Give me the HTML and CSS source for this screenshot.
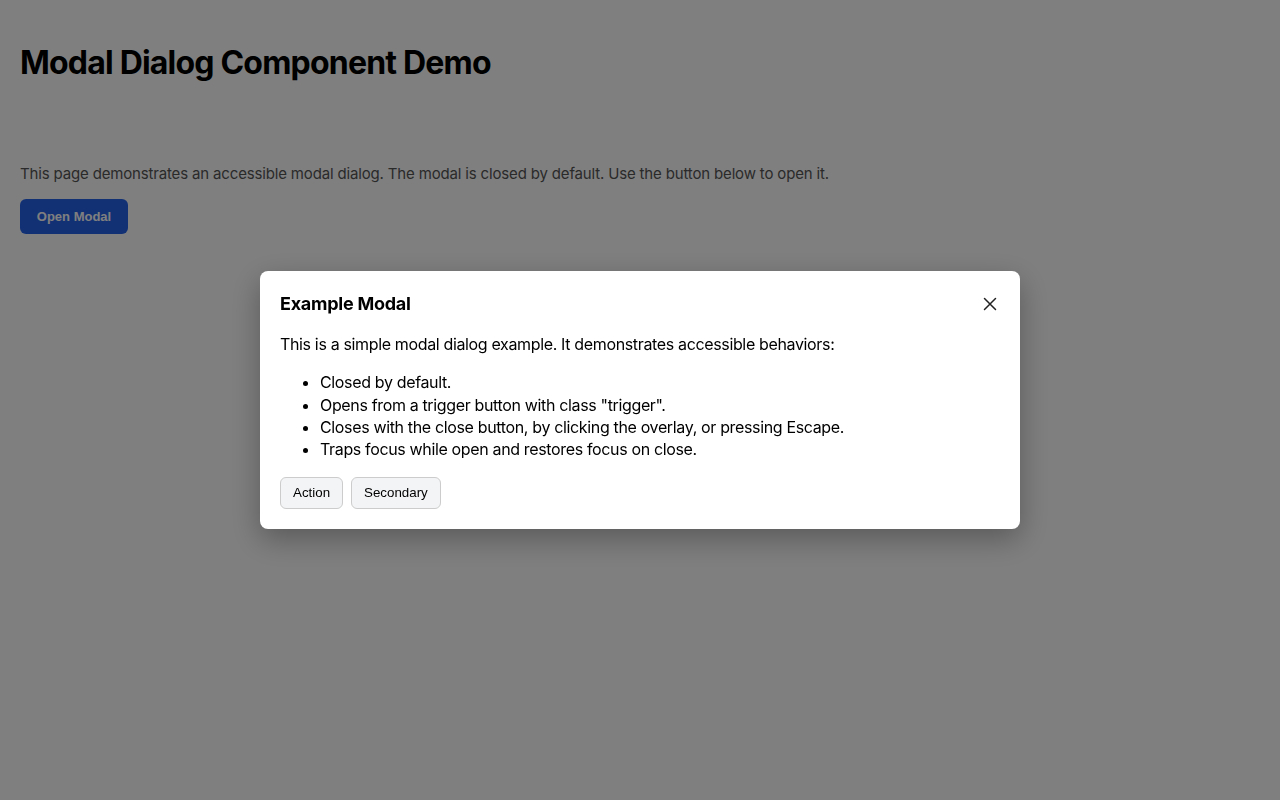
FILE: index.html
```html
<!DOCTYPE html>
<html lang="en">
<head>
<meta charset="utf-8">
<title>Modal Dialog Component Demo</title>
<link rel="stylesheet" href="styles.css">
</head>
<body>
<main class="page">
  <h1 class="page-title">Modal Dialog Component Demo</h1>
  <p class="intro">This page demonstrates an accessible modal dialog. The modal is closed by default. Use the button below to open it.</p>
  <button class="trigger" type="button">Open Modal</button>
</main>
<div class="overlay">
  <div class="modal" role="dialog" aria-modal="true" aria-labelledby="modal-title">
    <div class="modal-header">
      <h2 class="modal-title" id="modal-title">Example Modal</h2>
      <button class="close" type="button" aria-label="Close">
        <svg width="14" height="14" viewBox="0 0 14 14" aria-hidden="true"><path d="M1.5 1.5 L12.5 12.5 M12.5 1.5 L1.5 12.5" stroke="#222" stroke-width="1.5" stroke-linecap="round" fill="none"/></svg>
      </button>
    </div>
    <p class="modal-text">This is a simple modal dialog example. It demonstrates accessible behaviors:</p>
    <ul class="modal-list">
      <li>Closed by default.</li>
      <li>Opens from a trigger button with class "trigger".</li>
      <li>Closes with the close button, by clicking the overlay, or pressing Escape.</li>
      <li>Traps focus while open and restores focus on close.</li>
    </ul>
    <div class="modal-actions">
      <button class="btn" type="button">Action</button>
      <button class="btn" type="button">Secondary</button>
    </div>
  </div>
</div>
</body>
</html>
```
FILE: styles.css
```css
* { box-sizing: border-box; }
html, body { margin: 0; padding: 0; }
body {
  font-family: Inter, "Liberation Sans", Arial, sans-serif;
  background: #fff;
  color: #111;
  height: 800px;
}
.page {
  padding: 44px 20px 20px;
}
.page-title {
  margin: 0 0 81px;
  font-size: 32px;
  line-height: 38px;
  font-weight: 700;
  color: #000;
  letter-spacing: -0.8px;
}
.intro {
  margin: 0 0 14px;
  font-size: 15px;
  line-height: 22px;
  color: #555;
  letter-spacing: -0.16px;
}
.trigger {
  font-family: "Liberation Sans", Arial, sans-serif;
  font-size: 13px;
  font-weight: 700;
  color: #fff;
  background: #2563eb;
  border: none;
  border-radius: 6px;
  height: 35px;
  width: 108px;
  padding: 0;
}
.overlay {
  position: fixed;
  inset: 0;
  background: rgba(0, 0, 0, 0.5);
  display: flex;
  align-items: center;
  justify-content: center;
}
.modal {
  width: 760px;
  background: #fff;
  border-radius: 8px;
  padding: 20px;
  box-shadow: 0 10px 30px rgba(0, 0, 0, 0.3);
  color: #000;
}
.modal-header {
  display: flex;
  align-items: center;
  justify-content: space-between;
  height: 24px;
  margin-top: 1px;
  margin-bottom: -1px;
}
.modal-title {
  margin: 0;
  font-size: 18px;
  line-height: 24px;
  font-weight: 700;
  letter-spacing: -0.25px;
}
.close {
  background: none;
  border: none;
  padding: 0;
  width: 24px;
  height: 24px;
  display: flex;
  align-items: center;
  justify-content: center;
  margin-right: -2px;
}
.modal-text {
  margin: 18px 0 16px;
  font-size: 16px;
  line-height: 22px;
  letter-spacing: -0.35px;
}
.modal-list {
  margin: 0 0 16px;
  padding-left: 40px;
  font-size: 16px;
  line-height: 22.4px;
  letter-spacing: -0.35px;
}
.modal-actions {
  display: flex;
  gap: 8px;
}
.btn {
  font-family: "Liberation Sans", Arial, sans-serif;
  font-size: 13.33px;
  color: #000;
  background: #f3f4f6;
  border: 1px solid #ccc;
  border-radius: 6px;
  height: 32px;
  padding: 0 12px;
}
```
